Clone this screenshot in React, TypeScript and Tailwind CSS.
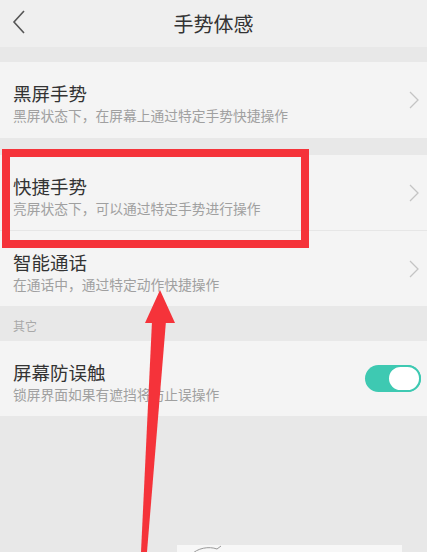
import React from "react";

const font = { fontFamily: '"Noto Sans CJK SC", "Noto Sans", sans-serif' };

function Chevron() {
  return (
    <svg width="10" height="18" viewBox="0 0 10 18" className="shrink-0">
      <path d="M1 1 L9 9 L1 17" fill="none" stroke="#c4c4c4" strokeWidth="1.3" />
    </svg>
  );
}

function Row({
  title,
  sub,
  right,
  h = "h-[75px]",
}: {
  title: string;
  sub: string;
  right: React.ReactNode;
  h?: string;
}) {
  return (
    <div className={`${h} flex items-center justify-between bg-[#f4f4f4] pl-[13px] pr-[8px]`}>
      <div className="flex flex-col pt-[6px]">
        <div className="text-[18.5px] leading-[22px] text-[#333333]">{title}</div>
        <div className="mt-[2px] text-[13.75px] leading-[18px] text-[#a0a0a0]">{sub}</div>
      </div>
      {right}
    </div>
  );
}

function Toggle() {
  return (
    <div className="relative mr-[-2px] h-[27px] w-[56px] rounded-full bg-[#3ec9b2]">
      <div className="absolute right-0 top-0 h-[27px] w-[34px] rounded-full border-2 border-[#3ec9b2] bg-white" />
    </div>
  );
}

export default function App() {
  return (
    <div className="relative flex h-[552px] w-[431px] overflow-hidden bg-white" style={font}>
      <div className="flex w-[427px] flex-col bg-[#e8e8e8]">
        {/* top bar */}
        <div className="relative flex h-[47px] items-center justify-center bg-[#efefef]">
          <svg width="14" height="24" viewBox="0 0 14 24" className="absolute left-[12px] top-[10px]">
            <path d="M12 1 L2 12 L12 23" fill="none" stroke="#555" strokeWidth="1.6" />
          </svg>
          <div className="text-[20px] text-[#333333]">手势体感</div>
        </div>
        <div className="h-[15px]" />
        <Row h="h-[76px]" title="黑屏手势" sub="黑屏状态下，在屏幕上通过特定手势快捷操作" right={<Chevron />} />
        <div className="h-[17px]" />
        <Row title="快捷手势" sub="亮屏状态下，可以通过特定手势进行操作" right={<Chevron />} />
        <div className="h-px bg-[#e6e6e6]" />
        <Row title="智能通话" sub="在通话中，通过特定动作快捷操作" right={<Chevron />} />
        <div className="flex h-[35px] items-end pb-[6px] pl-[13px] text-[12px] text-[#a8a8a8]">其它</div>
        <Row title="屏幕防误触" sub="锁屏界面如果有遮挡将防止误操作" right={<Toggle />} />
      </div>

      {/* highlight frame */}
      <div className="absolute left-[2px] top-[149px] h-[99px] w-[307px] border-[8px] border-[#f5333a]" />

      {/* pointer arrow */}
      <svg className="absolute left-0 top-0" width="431" height="552" viewBox="0 0 431 552">
        <polygon points="160,290 175,323 145,323" fill="#f5333a" />
        <polygon points="152,321 166,321 147,552 141,552" fill="#f5333a" />
      </svg>

      {/* bottom floating strip */}
      <div className="absolute left-[177px] top-[545px] h-[10px] w-[225px] bg-[#f7f7f7]">
        <svg width="40" height="10" viewBox="0 0 40 10" className="absolute left-[12px] top-0">
          <path d="M2 10 C8 3 20 1 28 4 L32 1" fill="none" stroke="#999" strokeWidth="1" />
        </svg>
      </div>
    </div>
  );
}
